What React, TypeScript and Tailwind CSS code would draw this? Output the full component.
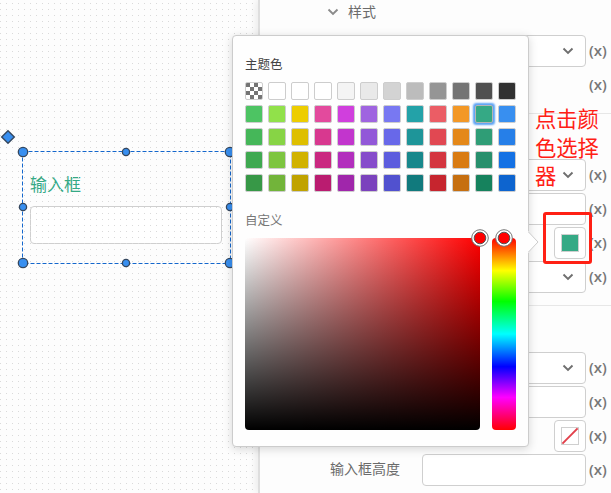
import React from "react";

const palette: string[][] = [
  ["checker", "#ffffff", "#ffffff", "#ffffff", "#f4f4f4", "#e9e9e9", "#d3d3d3", "#bcbcbc", "#959595", "#747474", "#505050", "#313131"],
  ["#4dc463", "#91e14a", "#edcd00", "#e34a9d", "#d03fdd", "#9f64e0", "#7878f2", "#23a2a8", "#eb5d65", "#f39826", "#35a985", "#388ff0"],
  ["#45b759", "#87d445", "#debf00", "#d8388f", "#c235cd", "#9258d8", "#6868e9", "#1e9599", "#e14852", "#e48819", "#2f9d76", "#267fe8"],
  ["#3fa951", "#7dc540", "#d1b200", "#ca2880", "#b22ebd", "#864ccb", "#5d5dde", "#18888c", "#d4353f", "#d97b12", "#278f6c", "#1471e4"],
  ["#379847", "#72b43a", "#c0a300", "#ba1c70", "#a026ab", "#7b42bd", "#5151cf", "#117a7d", "#c6252e", "#c66f10", "#16825d", "#0d64cf"],
];

const font = "font-['Noto_Sans','Noto_Sans_CJK_SC',sans-serif]";

function Chevron({ light = false }: { light?: boolean }) {
  return (
    <svg width="12" height="8" viewBox="0 0 12 8" fill="none" className={light ? "mt-[2px] text-[#8b8b8b]" : "text-[#6f6f6f]"}>
      <path d="M1.5 1.5 6 6l4.5-4.5" stroke="currentColor" strokeWidth="1.9" />
    </svg>
  );
}

function Expr() {
  return (
    <span className="ml-[2px] h-8 w-[20px] shrink-0 text-center text-[15px] leading-[30px] font-semibold text-[#777777] font-['Open_Sans','Noto_Sans',sans-serif]">(x)</span>
  );
}

function Row({ kind, label }: { kind: "select" | "input" | "empty" | "color" | "none"; label?: string }) {
  return (
    <div className="flex h-8 items-center">
      <div className="h-8 w-[162px] shrink-0 pl-[70px] text-[14px] leading-[30px] whitespace-nowrap text-[#6b6b6b]">{label}</div>
      {kind === "select" || kind === "input" ? (
        <div className="flex h-8 w-[164px] shrink-0 items-center justify-end rounded-[4px] border border-[#cfcfcf] bg-white pr-[11px]">
          {kind === "select" && <Chevron />}
        </div>
      ) : (
        <div className="flex h-8 w-[164px] shrink-0 justify-end">
          {kind !== "empty" && (
            <div className="flex size-8 items-center justify-center rounded-[4px] border border-[#cfcfcf] bg-white">
              {kind === "color" ? (
                <div className="size-[18px] border border-[#cfcfcf] bg-[#35a985]" />
              ) : (
                <svg width="18" height="18" viewBox="0 0 18 18">
                  <rect x=".5" y=".5" width="17" height="17" fill="white" stroke="#cfcfcf" />
                  <path d="M1.4 16.6 16.6 1.4" stroke="#e2404b" strokeWidth="2" />
                </svg>
              )}
            </div>
          )}
        </div>
      )}
      <Expr />
    </div>
  );
}

function Canvas() {
  const corners = [[23, 152], [230, 152], [23, 263], [230, 263]];
  const mids = [[126, 152], [126, 263], [23, 207], [230, 207]];
  return (
    <section className="relative h-full w-[258px] shrink-0 overflow-hidden bg-[#fdfdfd]">
      <svg className="absolute inset-0" width="258" height="493">
        <defs>
          <pattern id="dots" width="6" height="6" patternUnits="userSpaceOnUse">
            <rect x="0" y="3" width="1" height="1" fill="#dadada" />
          </pattern>
        </defs>
        <rect width="258" height="493" fill="url(#dots)" />
        <rect x="22.5" y="151.5" width="208" height="112" fill="none" stroke="#1467cc" strokeDasharray="4 2" />
        <path d="M8 130.7 14.3 137 8 143.3 1.7 137Z" fill="#388ff0" stroke="#35475e" strokeWidth="1.4" />
      </svg>
      <div className={"pt-[172px] pl-[30px] " + font}>
        <div className="h-[34px] text-[17px] leading-[26px] text-[#35a985]">输入框</div>
        <div className="h-[38px] w-[192px] rounded-[4px] border border-[#cfcfcf] bg-white" />
      </div>
      <svg className="absolute inset-0" width="258" height="493" fill="#388ff0" stroke="#35475e">
        {corners.map(([x, y]) => <circle key={x + "-" + y} cx={x} cy={y} r="4.7" strokeWidth="1.3" />)}
        {mids.map(([x, y]) => <circle key={x + "-" + y} cx={x} cy={y} r="3.6" strokeWidth="1.3" />)}
      </svg>
    </section>
  );
}

function Swatch({ color, selected }: { color: string; selected: boolean }) {
  return (
    <div
      className={"size-[18px] rounded-[2px] border " + (selected ? "border-[#b5b5b5] shadow-[0_0_2px_1.5px_#5aa2f5]" : "border-[#cdcdcd]") + (color === "checker" ? " bg-[repeating-conic-gradient(#fff_0_25%,#747474_0_50%)] bg-[length:8px_8px]" : "")}
      style={color === "checker" ? undefined : { backgroundColor: color }}
    />
  );
}

function Knob({ place }: { place: string }) {
  return (
    <svg className={"absolute -top-[9px] " + place} width="18" height="18" viewBox="0 0 18 18">
      <circle cx="9" cy="9" r="8.3" fill="white" stroke="#777" />
      <circle cx="9" cy="9" r="5.8" fill="red" stroke="#555" />
    </svg>
  );
}

function Picker() {
  return (
    <div className={"absolute top-[35px] left-[232px] h-[412px] w-[297px] rounded-[4px] border border-[#cccccc] bg-[#fefefe] px-3 pt-[18px] shadow-[0_2px_10px_rgba(0,0,0,0.16)] " + font}>
      <svg className="absolute top-[195px] left-[294px]" width="12" height="22" viewBox="0 0 12 22">
        <path d="M0 0H1.5V1L11 11 1.5 21v1H0Z" fill="#fefefe" />
        <path d="M1.5 1 11 11 1.5 21" fill="none" stroke="#ccc" />
      </svg>
      <h2 className="h-7 text-[12.5px] leading-[22px] text-[#444444]">主题色</h2>
      <div className="grid grid-cols-12 gap-[5px]">
        {palette.flatMap((row, r) => row.map((color, c) => <Swatch key={r + "-" + c} color={color} selected={r === 1 && c === 10} />))}
      </div>
      <h2 className="mt-[18px] h-7 text-[12.5px] leading-[22px] text-[#777777]">自定义</h2>
      <div className="flex gap-3">
        <div className="relative h-[192px] w-[235px]">
          <div className="size-full rounded-[4px] bg-[linear-gradient(to_top,#000,transparent),linear-gradient(to_right,#fff,#f00)]" />
          <Knob place="left-[226px]" />
        </div>
        <div className="relative h-[192px] w-6">
          <div className="size-full rounded-[4px] bg-[linear-gradient(to_bottom,#f00,#ff0_17%,#0f0_33%,#0ff_50%,#00f_67%,#f0f_83%,#f00)]" />
          <Knob place="left-[3px]" />
        </div>
      </div>
    </div>
  );
}

export default function App() {
  return (
    <main className="relative flex h-[493px] w-[611px] overflow-hidden bg-[#fdfdfd]">
      <Canvas />
      <aside className={"relative w-[353px] shrink-0 border-l-2 border-[#dedede] bg-[#fdfdfd] shadow-[-2px_0_8px_rgba(0,0,0,0.08)] " + font}>
        <header className="flex h-[35px] items-start pt-[1px] pl-[67px]">
          <div className="flex h-5 items-center gap-[9px] text-[14px] text-[#6b6b6b]"><Chevron light />样式</div>
        </header>
        <div className="flex h-[79px] flex-col gap-[2px] border-b border-[#e7e7e7]">
          <Row kind="select" /><Row kind="empty" />
        </div>
        <div className="flex h-[192px] flex-col gap-[2px] border-b border-[#e7e7e7] pt-[45px]">
          <Row kind="select" /><Row kind="input" /><Row kind="color" /><Row kind="select" />
        </div>
        <div className="flex flex-col gap-[2px] pt-[46px]">
          <Row kind="select" /><Row kind="input" /><Row kind="none" /><Row kind="input" label="输入框高度" />
        </div>
      </aside>
      <Picker />
      <div className="absolute top-[212px] left-[543px] h-[52px] w-[49px] rounded-[3px] border-[3px] border-[#ff2014]" />
      <div className={"absolute top-[105px] left-[535px] flex flex-col items-start text-[21.3px] leading-[28.5px] whitespace-nowrap text-[#ff2014] " + font}>
        <span>点击颜</span>
        <span>色选择</span>
        <span>器</span>
      </div>
    </main>
  );
}
